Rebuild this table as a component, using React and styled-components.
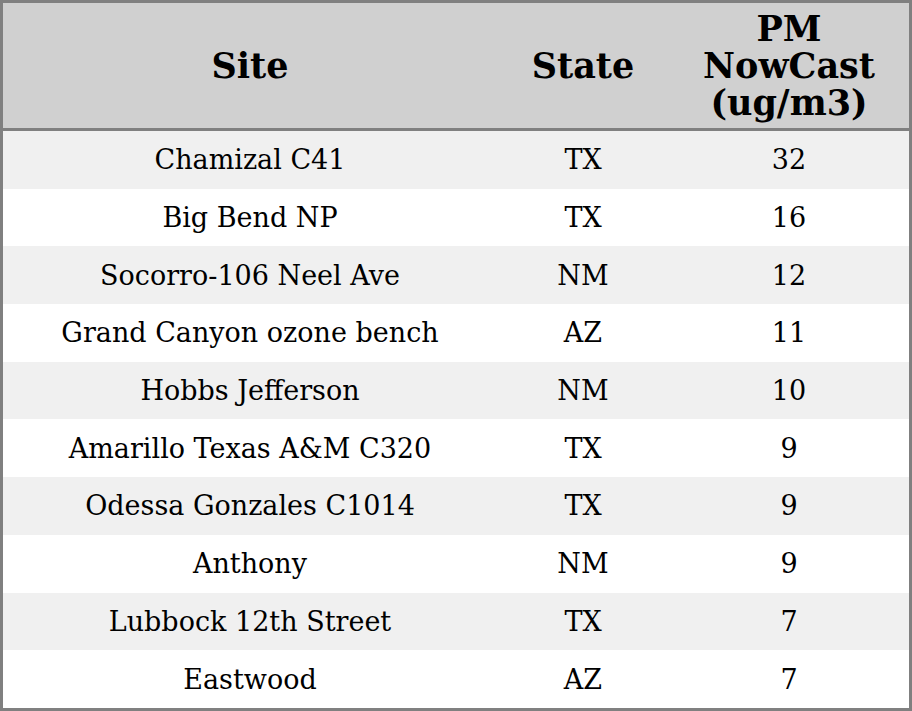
import React from "react";
import styled, { createGlobalStyle } from "styled-components";

const Global = createGlobalStyle`
  html, body { margin: 0; padding: 0; background: #fff; }
  body { font-family: "DejaVu Serif", serif; }
`;

const Table = styled.table`
  width: 912px;
  height: 711px;
  border: 3px solid #808080;
  border-spacing: 0;
  border-collapse: separate;
  box-sizing: border-box;
  table-layout: fixed;
  font-family: "DejaVu Serif", serif;
  color: #000;
`;

const Th = styled.th`
  background: #d0d0d0;
  border-bottom: 3px solid #808080;
  height: 128px;
  padding: 0;
  font-size: 35px;
  font-weight: bold;
  line-height: 37px;
  text-align: center;
  vertical-align: middle;
  width: ${(p) => p.$w}px;
  box-sizing: border-box;
`;

const Row = styled.tr`
  background: ${(p) => (p.$alt ? "#f0f0f0" : "#ffffff")};
  height: 57.7px;
`;

const Td = styled.td`
  font-size: 27px;
  text-align: center;
  vertical-align: middle;
  padding: 0;
`;

const data = [
  ["Chamizal C41", "TX", 32],
  ["Big Bend NP", "TX", 16],
  ["Socorro-106 Neel Ave", "NM", 12],
  ["Grand Canyon ozone bench", "AZ", 11],
  ["Hobbs Jefferson", "NM", 10],
  ["Amarillo Texas A&M C320", "TX", 9],
  ["Odessa Gonzales C1014", "TX", 9],
  ["Anthony", "NM", 9],
  ["Lubbock 12th Street", "TX", 7],
  ["Eastwood", "AZ", 7],
];

export default function App() {
  return (
    <>
      <Global />
      <Table>
        <thead>
          <tr>
            <Th $w={494}>Site</Th>
            <Th $w={172}>State</Th>
            <Th $w={240}>
              PM
              <br />
              NowCast
              <br />
              (ug/m3)
            </Th>
          </tr>
        </thead>
        <tbody>
          {data.map((r, i) => (
            <Row key={i} $alt={i % 2 === 0}>
              <Td>{r[0]}</Td>
              <Td>{r[1]}</Td>
              <Td>{r[2]}</Td>
            </Row>
          ))}
        </tbody>
      </Table>
    </>
  );
}
